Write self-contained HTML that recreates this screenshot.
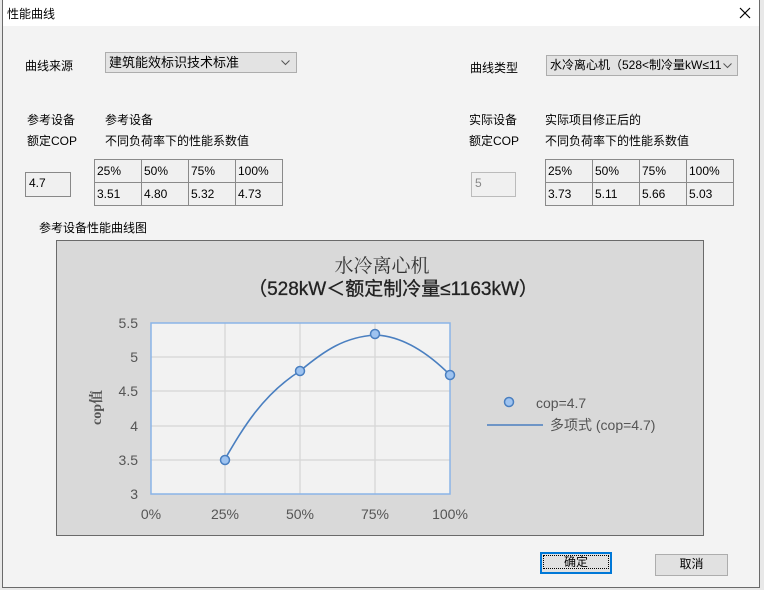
<!DOCTYPE html><html><head><meta charset="utf-8"><style>
*{margin:0;padding:0;box-sizing:border-box}
body{width:764px;height:590px;background:#e8e8e8;position:relative;overflow:hidden;font-family:"Liberation Sans","Noto Sans CJK SC",sans-serif;font-size:12px;color:#000}
.win{position:absolute;left:2px;top:0;width:758px;height:588px;background:#f3f3f3;border:1px solid #6a6a6a;border-top:none}
.tb{position:absolute;left:0;top:0;width:100%;height:26px;background:#fff}
.a{position:absolute;white-space:nowrap}
.sel{position:absolute;background:#e3e3e3;border:1px solid #adadad;height:21px;line-height:19px;padding-left:3px;font-size:13px}
.tbl{position:absolute;border:1px solid #6a6a6a;background:#f0f0f0;border-collapse:collapse}
.tbl td{border:1px solid #8a8a8a;height:23px;padding-left:2px;font-size:12px;width:47px}
.inp{position:absolute;border:1px solid #888;background:#f0f0f0;height:25px;padding:3px 0 0 3px}
.btn{position:absolute;background:#e1e1e1;border:1px solid #adadad;text-align:center;line-height:19px;font-size:12px}
</style></head><body>
<div class="win">
<div class="tb"><span class="a" style="left:4px;top:5px;font-size:12px">性能曲线</span>
<svg class="a" style="left:736px;top:7px" width="12" height="12"><path d="M1 1L11 11M11 1L1 11" stroke="#000" stroke-width="1.2"/></svg></div>
<span class="a" style="left:22px;top:57px">曲线来源</span>
<div class="sel" style="left:102px;top:52px;width:192px">建筑能效标识技术标准<svg class="a" style="right:6px;top:7px" width="9" height="6"><path d="M0.5 0.5L4.5 4.5L8.5 0.5" stroke="#555" fill="none"/></svg></div>
<span class="a" style="left:467px;top:59px">曲线类型</span>
<div class="sel" style="left:543px;top:55px;width:192px;font-size:12px">水冷离心机（528&lt;制冷量kW≤11<svg class="a" style="right:5px;top:7px" width="9" height="6"><path d="M0.5 0.5L4.5 4.5L8.5 0.5" stroke="#555" fill="none"/></svg></div>
<span class="a" style="left:24px;top:111px">参考设备</span>
<span class="a" style="left:24px;top:132px">额定COP</span>
<span class="a" style="left:102px;top:111px">参考设备</span>
<span class="a" style="left:102px;top:132px">不同负荷率下的性能系数值</span>
<span class="a" style="left:466px;top:111px">实际设备</span>
<span class="a" style="left:466px;top:132px">额定COP</span>
<span class="a" style="left:542px;top:111px">实际项目修正后的</span>
<span class="a" style="left:542px;top:132px">不同负荷率下的性能系数值</span>
<div class="inp" style="left:22px;top:172px;width:46px">4.7</div>
<div class="inp" style="left:468px;top:172px;width:45px;color:#888;border-color:#bbb">5</div>
<table class="tbl" style="left:91px;top:159px"><tr><td>25%</td><td>50%</td><td>75%</td><td>100%</td></tr><tr><td>3.51</td><td>4.80</td><td>5.32</td><td>4.73</td></tr></table>
<table class="tbl" style="left:542px;top:159px"><tr><td>25%</td><td>50%</td><td>75%</td><td>100%</td></tr><tr><td>3.73</td><td>5.11</td><td>5.66</td><td>5.03</td></tr></table>
<span class="a" style="left:36px;top:219px">参考设备性能曲线图</span>
</div>
<svg class="a" style="left:0;top:0" width="764" height="590">
<rect x="56.5" y="240.5" width="647" height="295" fill="#d9d9d9" stroke="#6a6a6a"/>
<text x="382" y="272" font-size="19" text-anchor="middle" fill="#333" font-family="Liberation Serif,Noto Serif CJK SC,serif">水冷离心机</text>
<text x="393" y="295" font-size="19" text-anchor="middle" fill="#222" stroke="#222" stroke-width="0.3" font-family="Liberation Sans,Noto Sans CJK SC,sans-serif">（528kW＜额定制冷量≤1163kW）</text>
<rect x="151" y="323" width="299" height="171" fill="#f2f2f2"/>
<g stroke="#d9d9d9" stroke-width="1.5"><path d="M151 357H450M151 391H450M151 426H450M151 460H450M225 323V494M300 323V494M375 323V494"/></g>
<rect x="151" y="323" width="299" height="171" fill="none" stroke="#8ab4e8" stroke-width="1.5"/>
<g font-size="14" fill="#555" text-anchor="end"><text x="138" y="328">5.5</text><text x="138" y="362">5</text><text x="138" y="396">4.5</text><text x="138" y="431">4</text><text x="138" y="465">3.5</text><text x="138" y="499">3</text></g>
<g font-size="14" fill="#555" text-anchor="middle"><text x="151" y="519">0%</text><text x="225" y="519">25%</text><text x="300" y="519">50%</text><text x="375" y="519">75%</text><text x="450" y="519">100%</text></g>
<text transform="translate(101,425) rotate(-90)" font-size="14" fill="#555" font-weight="bold" font-family="Liberation Serif,Noto Serif CJK SC,serif">cop值</text>
<path fill="none" stroke="#4a7fc0" stroke-width="1.6" d="M225 459C242 430 262 395 300 371C325 350 345 337 375 335C400 336 425 350 450 375"/>
<g fill="#9ec3f0" stroke="#4a7fc0" stroke-width="1.5"><circle cx="225" cy="460" r="4.5"/><circle cx="300" cy="371" r="4.5"/><circle cx="375" cy="334" r="4.5"/><circle cx="450" cy="375" r="4.5"/><circle cx="509" cy="402" r="4.5"/></g>
<text x="536" y="408" font-size="14" fill="#555">cop=4.7</text>
<path d="M487 425H543" stroke="#4a7fc0" stroke-width="1.5"/>
<text x="550" y="430" font-size="14" fill="#555">多项式 (cop=4.7)</text>
</svg>
<div class="btn" style="left:540px;top:552px;width:72px;height:22px;border:2px solid #0078d7;line-height:17px"><div style="border:1px dotted #000;margin:1px;height:14px;line-height:13px">确定</div></div>
<div class="btn" style="left:655px;top:554px;width:73px;height:22px">取消</div>
</body></html>
